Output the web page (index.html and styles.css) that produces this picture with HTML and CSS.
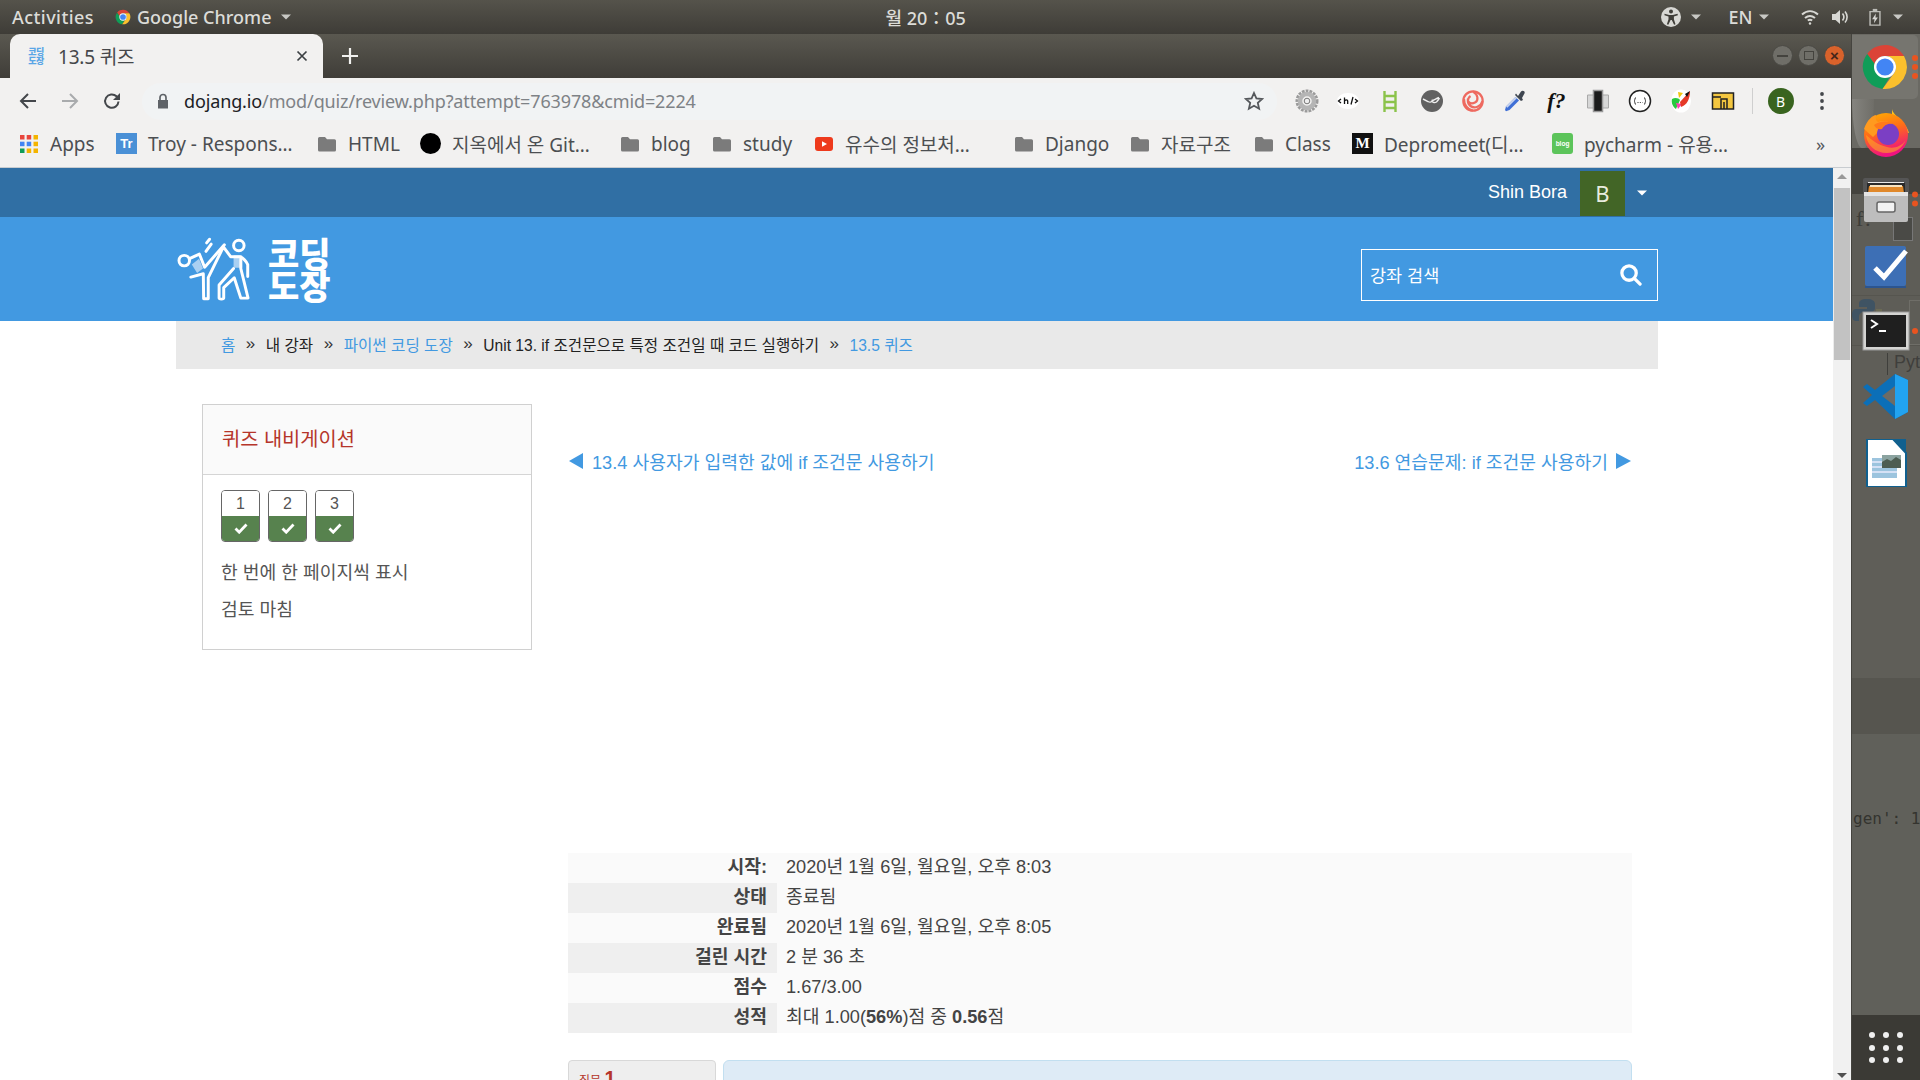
FILE: index.html
```html
<!DOCTYPE html>
<html lang="ko">
<head>
<meta charset="utf-8">
<title>13.5 퀴즈</title>
<link rel="stylesheet" href="styles.css">
</head>
<body>
<svg class="defs" width="0" height="0" aria-hidden="true">
  <symbol id="chrome" viewBox="0 0 48 48">
    <path fill="#db4437" d="M6.2 11A22 22 0 0 1 43 13H24a11 11 0 0 0-10.5 7.8z"/>
    <path fill="#0f9d58" d="M6.2 11a22 22 0 0 0 15.3 34.9l8-13.4a11 11 0 0 1-16-11.7z"/>
    <path fill="#fbc02d" d="M43 13a22 22 0 0 1-21.5 32.9l12-16.4A11 11 0 0 0 24 13z"/>
    <circle cx="24" cy="24" r="11" fill="#fff"/>
    <circle cx="24" cy="24" r="8.6" fill="#4285f4"/>
  </symbol>
  <symbol id="folder" viewBox="0 0 18 16">
    <path fill="#7b7b7b" d="M1.5 1h5.5l2 2.2h7.5a1.5 1.5 0 0 1 1.500 1.500V14a1.500 1.500 0 0 1-1.500 1.500h-15A1.500 1.500 0 0 1 0 14V2.500A1.500 1.500 0 0 1 1.500 1z"/>
  </symbol>
  <symbol id="caret" viewBox="0 0 10 6"><path fill="currentColor" d="M0 .5h10L5 5.500z"/></symbol>
</svg>

<header class="topbar">
  <span class="tb-activities">Activities</span>
  <span class="tb-app"><svg class="i16"><use href="#chrome"/></svg>Google Chrome<svg class="tb-caret"><use href="#caret"/></svg></span>
  <span class="tb-clock">월 20：05</span>
  <span class="tb-tray">
    <svg class="i20" viewBox="0 0 20 20"><circle cx="10" cy="10" r="10" fill="#d8d8d4"/><circle cx="10" cy="4.500" r="2" fill="#3f3d38"/><path fill="#3f3d38" d="M3.500 6.800l4.700 1.100h3.600l4.700-1.100.4 1.400-4 1.400v2.600l1.600 5-1.400.5-2.300-4.600h-1.200l-2.300 4.600-1.400-.5 1.600-5V9.600l-4-1.400z"/></svg>
    <svg class="tb-caret tc-a"><use href="#caret"/></svg>
    <span class="tb-lang">EN</span>
    <svg class="tb-caret tc-b"><use href="#caret"/></svg>
    <svg class="i18 tc-c" viewBox="0 0 18 18" fill="none" stroke="#d8d8d4" stroke-width="2"><path d="M1 6.500c5-4.500 11-4.500 16 0M4 10c3-2.500 7-2.500 10 0"/><path d="M6.800 12.500c1.400-1 3-1 4.400 0"/><circle cx="9" cy="15.500" r="1.200" fill="#d8d8d4" stroke="none"/></svg>
    <svg class="i18 tc-d" viewBox="0 0 18 18"><path fill="#d8d8d4" d="M1 6h3.500L9 2v14l-4.500-4H1z"/><path fill="none" stroke="#d8d8d4" stroke-width="1.600" d="M11.500 5.500c1.600 2 1.600 5 0 7M14 3.500c2.800 3.200 2.800 8 0 11"/></svg>
    <svg class="i18 tc-e" viewBox="0 0 14 20"><path fill="none" stroke="#bdbdb8" stroke-width="1.600" d="M1.500 4h11v15h-11z"/><path fill="#bdbdb8" d="M4.500 1h5v3h-5z"/><path fill="#d8d8d4" d="M8 6L3.800 12.500h2.700L5.800 17 10.200 10.500H7.500z"/></svg>
    <svg class="tb-caret tc-f"><use href="#caret"/></svg>
  </span>
</header>

<div class="desk">
  <div class="browser">
    <div class="tabstrip">
      <div class="tab">
        <span class="fav">코딩<br>도장</span>
        <span class="tab-title">13.5 퀴즈</span>
        <svg class="tab-x" viewBox="0 0 12 12"><path stroke="#3c4043" stroke-width="1.700" d="M1.500 1.500l9 9M10.500 1.500l-9 9"/></svg>
      </div>
      <svg class="tab-plus" viewBox="0 0 16 16"><path stroke="#f1f1ef" stroke-width="2.200" d="M8 0v16M0 8h16"/></svg>
      <div class="winbtns">
        <span class="wb"><i class="wb-min"></i></span>
        <span class="wb"><i class="wb-max"></i></span>
        <span class="wb wb-close">×</span>
      </div>
    </div>

    <div class="toolbar">
      <svg class="nav" viewBox="0 0 20 20" fill="none" stroke="#44474b" stroke-width="2"><path d="M18 10H3M10 3l-7 7 7 7"/></svg>
      <svg class="nav" viewBox="0 0 20 20" fill="none" stroke="#a9abad" stroke-width="2"><path d="M2 10h15M10 3l7 7-7 7"/></svg>
      <svg class="nav" viewBox="0 0 20 20" fill="none" stroke="#44474b" stroke-width="2"><path d="M16.500 10.500a6.700 6.700 0 1 1-2-5.200L17 7.500"/><path fill="#44474b" stroke="none" d="M18 2v7h-7z"/></svg>
      <div class="omni">
        <svg class="lock" viewBox="0 0 12 16"><path fill="#5f6368" d="M1 7h10v8.500H1z"/><path fill="none" stroke="#5f6368" stroke-width="1.700" d="M3 7V4.500a3 3 0 0 1 6 0V7"/></svg>
        <span class="url"><b>dojang.io</b>/mod/quiz/review.php?attempt=763978&amp;cmid=2224</span>
        <svg class="star" viewBox="0 0 20 20"><path fill="none" stroke="#55585c" stroke-width="1.800" d="M10 2l2.400 5.400 5.800.6-4.400 3.900 1.300 5.800L10 14.700l-5.100 3 1.300-5.800L1.800 8l5.800-.6z"/></svg>
      </div>
      <div class="exts">
        <span class="ext"><svg viewBox="0 0 24 24"><circle cx="12" cy="12" r="9.500" fill="none" stroke="#9a9a9a" stroke-width="4" stroke-dasharray="2.600 1"/><circle cx="12" cy="12" r="7" fill="none" stroke="#b5b5b5" stroke-width="4.500"/><circle cx="12" cy="12" r="2.800" fill="#eee" stroke="#777"/></svg></span>
        <span class="ext"><svg viewBox="0 0 24 24"><ellipse cx="12" cy="12" rx="11" ry="8" fill="#fff"/><path fill="none" stroke="#111" stroke-width="1.300" d="M5 10l-2.500 2L5 14M8.500 8.500V15M8.500 12c1-1.500 3.200-1.500 3.200 0v3M15 15.500l2-7.500M19 10l2.500 2-2.500 2"/></svg></span>
        <span class="ext"><svg viewBox="0 0 24 24" fill="none" stroke="#8bc34a" stroke-width="2.400"><path d="M6.500 2v21M17.500 2v21M6 7h12M6 13h12M6 19h12"/></svg></span>
        <span class="ext"><svg viewBox="0 0 24 24"><circle cx="12" cy="12" r="11" fill="#616161"/><path fill="none" stroke="#eee" stroke-width="1.400" d="M3 10l5 2.500c1.500 1 3.500.8 4-.5.500 1.800 3 2 4.500 1 1-1 2-2.500 3-4M12 12c1-1 3-1.500 7-3.500"/></svg></span>
        <span class="ext"><svg viewBox="0 0 24 24" fill="none" stroke="#ee6a60" stroke-width="2.200"><circle cx="12" cy="12" r="9.700"/><path d="M12 2.500c5 3 6 9 2 11s-8 0-7-4M21.500 12c-1.500 5.500-8 8-12 5s-3-8 0-10M3 10c0 5 3 11 9 11.500"/></svg></span>
        <span class="ext"><svg viewBox="0 0 24 24"><path fill="#3f4650" d="M15 7l3-4.500c1.500-1.500 4-.5 3.700 1.500L19 9l1 2-2 1-6-6 1-1.500z"/><path fill="#3f6fd6" d="M12.500 8l3.500 3.500-9.500 9.500-3.500 1.200L2 21l1-3.500z"/><path fill="#c8d4ee" d="M12.500 8l1.300 1.300-9.500 9.500-1.300-1.300z"/></svg></span>
        <span class="ext ext-f"><i>f</i>?</span>
        <span class="ext"><svg viewBox="0 0 24 24"><path fill="#d7d7d7" stroke="#a9a9a9" d="M1.500 6h21v13h-21z"/><path fill="#1b1b1b" stroke="#999" stroke-width="1.500" d="M7.500 1.500h9v21h-9z"/></svg></span>
        <span class="ext"><svg viewBox="0 0 24 24"><circle cx="12" cy="12" r="10.500" fill="#fff" stroke="#222" stroke-width="1.500"/><path fill="none" stroke="#333" d="M8 8.500c-1.500 0-.8 3.500-2 3.500 1.200 0 .5 3.500 2 3.500M16 8.500c1.500 0 .8 3.500 2 3.500-1.200 0-.5 3.500-2 3.500"/><path stroke="#333" stroke-dasharray="1 1.300" d="M9.500 13.500h5"/></svg></span>
        <span class="ext"><svg viewBox="0 0 24 24"><ellipse cx="12" cy="12" rx="10" ry="11.500" fill="#fff"/><path fill="#27c93f" d="M3 10c3-2 7-1 8 1l-4 9c-3-2-5-6-4-10z"/><path fill="#ff3db4" d="M7 14l6 1-4 5z"/><path fill="#f1c40f" d="M9 3l5 1-4 5z"/><path fill="#e53927" d="M21 2L11 13l1 5c6-2 9-8 9-16z"/><path fill="#111" d="M21 2l-5 3 2 3z"/></svg></span>
        <span class="ext"><svg viewBox="0 0 24 24"><rect x="1.500" y="4" width="21" height="16" fill="#f3c640" stroke="#222" stroke-width="1.500"/><path fill="none" stroke="#222" stroke-width="1.500" d="M2 8h8M10 20V10h6v10M13 20v-7"/></svg></span>
        <span class="ext-div"></span>
        <span class="avatar-b">B</span>
        <svg class="kebab" viewBox="0 0 4 18"><circle cx="2" cy="2" r="1.900" fill="#44474b"/><circle cx="2" cy="9" r="1.900" fill="#44474b"/><circle cx="2" cy="16" r="1.900" fill="#44474b"/></svg>
      </div>
    </div>

    <nav class="bookmarks">
      <span class="bm"><svg class="bi" viewBox="0 0 18 18"><g><rect width="4.500" height="4.500" fill="#e8453c"/><rect x="6.700" width="4.500" height="4.500" fill="#e8453c"/><rect x="13.500" width="4.500" height="4.500" fill="#f4b400"/><rect y="6.700" width="4.500" height="4.500" fill="#4285f4"/><rect x="6.700" y="6.700" width="4.500" height="4.500" fill="#4285f4"/><rect x="13.500" y="6.700" width="4.500" height="4.500" fill="#f4b400"/><rect y="13.500" width="4.500" height="4.500" fill="#0f9d58"/><rect x="6.700" y="13.500" width="4.500" height="4.500" fill="#f4b400"/><rect x="13.500" y="13.500" width="4.500" height="4.500" fill="#f4b400"/></g></svg>Apps</span>
      <span class="bm"><span class="bi-tr">Tr</span>Troy - Respons…</span>
      <span class="bm"><svg class="bi"><use href="#folder"/></svg>HTML</span>
      <span class="bm"><span class="bi-dot"></span>지옥에서 온 Git…</span>
      <span class="bm"><svg class="bi"><use href="#folder"/></svg>blog</span>
      <span class="bm"><svg class="bi"><use href="#folder"/></svg>study</span>
      <span class="bm"><svg class="bi" viewBox="0 0 18 18"><rect y="2" width="18" height="14" rx="3" fill="#ee3a1c"/><path fill="#fff" d="M7 6.200L12 9l-5 2.800z"/></svg>유수의 정보처…</span>
      <span class="bm"><svg class="bi"><use href="#folder"/></svg>Django</span>
      <span class="bm"><svg class="bi"><use href="#folder"/></svg>자료구조</span>
      <span class="bm"><svg class="bi"><use href="#folder"/></svg>Class</span>
      <span class="bm"><span class="bi-m">M</span>Depromeet(디…</span>
      <span class="bm"><span class="bi-blog">blog</span>pycharm - 유용…</span>
      <span class="bm-more">»</span>
    </nav>

    <div class="viewport">
      <main class="page">
        <div class="userbar">
          <span class="uname">Shin Bora</span>
          <span class="uavatar">B</span>
          <svg class="ucaret"><use href="#caret"/></svg>
        </div>
        <div class="brand">
          <div class="logo">
            <svg class="logo-fig" viewBox="50 197 228 196" fill="none" stroke="#fff" stroke-width="9" stroke-linecap="round" stroke-linejoin="round">
              <circle cx="72" cy="268" r="16"/>
              <circle cx="238" cy="222" r="16"/>
              <path d="M138 240l16-22M140 214l9-11"/>
              <path fill="#a9d0f2" stroke="none" d="M95 280l22-18 12 30-18 14zM222 252h26v38h-26z"/>
              <path d="M92 318l38-10 1 76h14v-64l46-94 22 30h28c10 4 18 12 24 24v36"/>
              <path d="M88 262l30-14 16 40 60-68"/>
              <path d="M222 292l-44 50v40c0 4 14 4 14 0v-32l32-30 20 62h22l-22-90v-30"/>
            </svg>
            <span class="logo-text">코딩<br>도장</span>
          </div>
          <div class="search">
            <span>강좌 검색</span>
            <svg class="search-i" viewBox="0 0 24 24" fill="none" stroke="#fff" stroke-width="3.400" stroke-linecap="round"><circle cx="10.500" cy="10.500" r="7.500"/><path d="M16.500 16.500L22 22"/></svg>
          </div>
        </div>
        <div class="crumbs">
          <a>홈</a><span class="sep">»</span><span>내 강좌</span><span class="sep">»</span><a>파이썬 코딩 도장</a><span class="sep">»</span><span>Unit 13. if 조건문으로 특정 조건일 때 코드 실행하기</span><span class="sep">»</span><a>13.5 퀴즈</a>
        </div>
        <div class="columns">
          <aside class="quiznav">
            <h2>퀴즈 내비게이션</h2>
            <div class="qn-body">
              <div class="qn-btns">
                <span class="qb"><span class="qb-n">1</span><span class="qb-s"><svg viewBox="0 0 14 11"><path fill="none" stroke="#fff" stroke-width="2.800" d="M1.500 5.500l3.700 3.700 7.300-7.700"/></svg></span></span>
                <span class="qb"><span class="qb-n">2</span><span class="qb-s"><svg viewBox="0 0 14 11"><path fill="none" stroke="#fff" stroke-width="2.800" d="M1.500 5.500l3.700 3.700 7.300-7.700"/></svg></span></span>
                <span class="qb"><span class="qb-n">3</span><span class="qb-s"><svg viewBox="0 0 14 11"><path fill="none" stroke="#fff" stroke-width="2.800" d="M1.500 5.500l3.700 3.700 7.300-7.700"/></svg></span></span>
              </div>
              <p class="qn-link">한 번에 한 페이지씩 표시</p>
              <p class="qn-link">검토 마침</p>
            </div>
          </aside>
          <section class="content">
            <div class="pager">
              <a><i class="tri-l"></i>13.4 사용자가 입력한 값에 if 조건문 사용하기</a>
              <a>13.6 연습문제: if 조건문 사용하기<i class="tri-r"></i></a>
            </div>
            <table class="review">
              <tr><th>시작:</th><td>2020년 1월 6일, 월요일, 오후 8:03</td></tr>
              <tr><th>상태</th><td>종료됨</td></tr>
              <tr><th>완료됨</th><td>2020년 1월 6일, 월요일, 오후 8:05</td></tr>
              <tr><th>걸린 시간</th><td>2 분 36 초</td></tr>
              <tr><th>점수</th><td>1.67/3.00</td></tr>
              <tr><th>성적</th><td>최대 1.00(<b>56%</b>)점 중 <b>0.56</b>점</td></tr>
            </table>
            <div class="question">
              <div class="q-info">질문 <b>1</b></div>
              <div class="q-body"></div>
            </div>
          </section>
        </div>
      </main>
      <div class="scrollbar">
        <i class="sb-up"></i>
        <span class="sb-thumb"></span>
        <i class="sb-down"></i>
      </div>
    </div>
  </div>

  <aside class="dock">
    <span class="ghost gh-feather"></span>
    <span class="ghost gh-f"><i>f</i>?</span>
    <span class="ghost gh-phone"></span>
    <svg class="ghost gh-py" viewBox="0 0 30 32"><path fill="#3f5363" d="M15 1c-6 0-8 2-8 5v3h8v2H4c-3 0-4 3-4 6s1 6 4 6h3v-4c0-3 2-5 5-5h7c2 0 4-2 4-4V6c0-3-3-5-8-5z"/><path fill="#6b6a55" d="M24 11v4c0 3-2 5-5 5h-6v8c3 2 14 3 14-2v-4h3v-11z"/></svg>
    <span class="ghost gh-line"></span>
    <span class="ghost gh-pyth">Pyth</span>
    <span class="ghost gh-box"></span>
    <span class="ghost gh-gen">gen': 1</span>

    <div class="dock-cell dock-active">
      <svg class="di"><use href="#chrome"/></svg>
      <span class="pips"><i></i><i></i><i></i></span>
    </div>
    <div class="dock-cell">
      <svg class="di" viewBox="0 0 48 48">
        <defs><linearGradient id="ff" x1="0" y1="0" x2="0.3" y2="1"><stop offset="0" stop-color="#ffb300"/><stop offset=".5" stop-color="#ff6b1a"/><stop offset="1" stop-color="#f0127f"/></linearGradient></defs>
        <path fill="#ffc21a" d="M30 0c1 7 14 12 17 24L30 20z"/>
        <circle cx="24" cy="26" r="22" fill="url(#ff)"/>
        <path fill="#ff9a1f" d="M2 20c3-9 9-14 12-14-1 3 0 6 2 7 5-2 12-1 17 4l-14 3-8 8z"/>
        <circle cx="26" cy="25" r="11" fill="#7b3fc4"/>
        <path fill="#ff7a1a" d="M12 16c5-4 14-5 19-1-6-1-9 2-11 5-3 1-6 0-8-4z"/>
        <path fill="#ffb01f" d="M4 26c1 10 9 18 21 18 9 0 15-5 19-13-5 7-13 9-19 7-9-2-15-7-21-12z" opacity=".55"/>
      </svg>
    </div>
    <div class="dock-cell">
      <svg class="di" viewBox="0 0 48 48">
        <path fill="#555" d="M3 3h42a2 2 0 0 1 2 2v14H1V5a2 2 0 0 1 2-2z"/>
        <path fill="#e8e8e8" d="M6 7h36v12H6z"/>
        <path fill="#2a2a2a" d="M5 8h38v10H5z"/>
        <path fill="#e0882a" d="M7 11h34l1 7H6z"/>
        <path fill="#f7e3c0" d="M8 10h32v2H8z"/>
        <path fill="#bdbdbd" d="M2 19h44v26a2 2 0 0 1-2 2H4a2 2 0 0 1-2-2z"/>
        <path fill="#e4e4e4" d="M2 17h44v4H2z"/>
        <rect x="15" y="27" width="18" height="10" rx="2" fill="#f2f2f2" stroke="#666" stroke-width="1.500"/>
      </svg>
      <span class="pips"><i></i><i></i></span>
    </div>
    <div class="dock-cell">
      <svg class="di" viewBox="0 0 48 48">
        <rect x="3" y="5" width="41" height="40" rx="2" fill="#3d6fb5"/>
        <path fill="#2c5590" d="M3 45h41v2H3z"/>
        <path fill="none" stroke="#fff" stroke-width="5" d="M13 27l9 9L44 10"/>
      </svg>
    </div>
    <div class="dock-cell">
      <svg class="di" viewBox="0 0 48 48">
        <rect x="1" y="5" width="46" height="38" fill="#d4d4d2" stroke="#999"/>
        <rect x="4" y="8" width="40" height="32" fill="#1f1f1f"/>
        <path fill="none" stroke="#fff" stroke-width="2" d="M9 13l6 4-6 4"/>
        <path stroke="#fff" stroke-width="2" d="M17 24h7"/>
      </svg>
      <span class="pips"><i></i></span>
    </div>
    <div class="dock-cell">
      <svg class="di" viewBox="0 0 48 48">
        <path fill="#0b6fb8" d="M33 1l13 6v32l-13 7-20-19-8 6-4-3 9-8-9-8 4-3 8 6z"/>
        <path fill="#22a3f0" d="M33 1l13 6v32l-13 7z"/>
        <path fill="#6c6b65" d="M33 13v20l-13-10z"/>
      </svg>
    </div>
    <div class="dock-cell">
      <svg class="di" viewBox="0 0 48 48">
        <path fill="#fff" stroke="#10608f" stroke-width="2" d="M5 0h26l13 14v34H5z"/>
        <path fill="#10608f" d="M32 0h12v13z"/>
        <path fill="#9cc4de" d="M10 19h25v20H10z"/>
        <path fill="#eef" d="M10 22h11v2H10zM10 27h11v2H10zM10 32h25v2H10z" opacity=".7"/>
        <path fill="#4d5d52" d="M20 16h19v13H20z"/>
        <path fill="#8ba3a0" d="M20 16h19v5l-5-3-5 4-4-2-5 3z"/>
      </svg>
    </div>
    <div class="dock-apps">
      <i></i><i></i><i></i><i></i><i></i><i></i><i></i><i></i><i></i>
    </div>
  </aside>
</div>
</body>
</html>
```

FILE: styles.css
```css
* { box-sizing: border-box; }
html, body { margin: 0; padding: 0; height: 100%; }
body {
  width: 1920px; height: 1080px; overflow: hidden;
  display: flex; flex-direction: column;
  font-family: "Liberation Sans", "Noto Sans CJK KR", sans-serif;
  background: #fff;
}
.defs { position: absolute; }
i { font-style: normal; }

/* GNOME top bar */
.topbar {
  height: 34px; flex: none; display: flex; align-items: center;
  background: linear-gradient(#55534b, #3e3c37);
  color: #dcdcd8; font: 500 18px "Noto Sans", "Noto Sans CJK KR", sans-serif;
  padding-left: 12px;
}
.tb-activities { width: 103px; letter-spacing: .45px; white-space: nowrap; }
.tb-app { display: flex; align-items: center; gap: 6px; white-space: nowrap; }
.i16 { width: 16px; height: 16px; }
.i18 { width: 18px; height: 18px; }
.i20 { width: 20px; height: 20px; }
.tb-caret { width: 10px; height: 6px; color: #c8c8c4; margin-left: 4px; }
.tb-clock { margin-left: 594px; width: 79px; white-space: nowrap; }
.tb-tray { display: flex; align-items: center; margin-left: 697px; }
.tb-lang { margin-left: 27px; width: 30px; }
.tc-a { margin-left: 10px; }
.tc-b { margin-left: 1px; }
.tc-c { margin-left: 32px; }
.tc-d { margin-left: 12px; }
.tc-e { margin-left: 17px; }
.tc-f { margin-left: 9px; }

.desk { flex: 1; display: flex; min-height: 0; }
.browser { width: 1851px; flex: none; display: flex; flex-direction: column; min-height: 0; }

/* tabs */
.tabstrip {
  height: 44px; flex: none; display: flex; align-items: flex-end;
  background: linear-gradient(#5a5850, #3f3d38);
  padding-left: 10px;
}
.tab {
  width: 313px; height: 44px; background: #f2f1f0; border-radius: 10px 10px 0 0;
  display: flex; align-items: center; padding-left: 16px;
}
.fav {
  width: 20px; font: 900 9px/9px "Noto Sans CJK KR", sans-serif; color: #5aa6e6;
  text-align: center; letter-spacing: -.5px;
}
.tab-title {
  margin-left: 12px; width: 238px; white-space: nowrap;
  font: 19px "Noto Sans", "Noto Sans CJK KR", sans-serif; color: #45474a; letter-spacing: -.2px;
}
.tab-x { width: 12px; height: 12px; }
.tab-plus { width: 16px; height: 16px; margin: 0 0 14px 19px; }
.winbtns { display: flex; gap: 5px; margin: 0 0 12px auto; padding-right: 6px; }
.wb {
  width: 21px; height: 21px; border-radius: 50%; background: #6f6e68; border: 1px solid #4a4944;
  display: flex; align-items: center; justify-content: center;
}
.wb-min { width: 11px; height: 2px; background: #44433e; }
.wb-max { width: 10px; height: 9px; border: 1.500px solid #44433e; }
.wb-close { background: #d9622b; color: #44261a; font: 700 15px/1 "Liberation Sans", sans-serif; }

/* toolbar */
.toolbar {
  height: 44px; flex: none; background: #f2f1f0; display: flex; align-items: center;
  padding: 2px 0 0 18px;
}
.nav { width: 20px; height: 20px; margin-right: 22px; }
.omni {
  width: 1135px; height: 37px; margin-left: -2px; border-radius: 19px; background: #f1f3f4;
  display: flex; align-items: center; padding: 0 13px 0 15px;
}
.lock { width: 12px; height: 16px; }
.url {
  margin-left: 15px; flex: 1;
  font: 18px "Noto Sans", sans-serif; color: #7e8286; letter-spacing: -.13px; white-space: nowrap;
}
.url b { font-weight: 400; color: #202124; }
.star { width: 20px; height: 20px; }
.exts { display: flex; align-items: center; margin-left: 9px; }
.ext { width: 41.600px; display: flex; justify-content: center; align-items: center; }
.ext svg { width: 24px; height: 24px; }
.ext-f { font: italic 700 22px "Liberation Serif", serif; color: #111; }
.ext-f i { font-style: italic; }
.ext-div { width: 1px; height: 26px; background: #cfcfcf; margin-left: 8px; }
.avatar-b {
  width: 26px; height: 26px; border-radius: 50%; background: #39641f; color: #fff; margin-left: 15px;
  display: flex; align-items: center; justify-content: center; font: 14px "Noto Sans", sans-serif;
}
.kebab { width: 4px; height: 18px; margin-left: 26px; }

/* bookmarks */
.bookmarks {
  height: 46px; flex: none; background: #f2f1f0; border-bottom: 1px solid #c8ccd0;
  display: grid; align-items: center; padding: 0 0 2px 20px;
  grid-template-columns: 96px 202px 102px 201px 92px 102px 200px 116px 124px 97px 200px 268px auto;
  font: 19px "Noto Sans", "Noto Sans CJK KR", sans-serif; color: #4c4f52;
}
.bm { display: flex; align-items: center; gap: 12px; white-space: nowrap; }
.bi { width: 18px; height: 18px; flex: none; }
.bi-tr, .bi-m, .bi-blog {
  width: 21px; height: 21px; flex: none; display: flex; align-items: center; justify-content: center;
  margin-right: -1px;
}
.bi-tr { background: #4a90d6; color: #fff; font: 700 13px "Liberation Sans", sans-serif; }
.bi-m { background: #111; color: #fff; font: 700 15px "Liberation Serif", serif; }
.bi-blog { background: #5cc45a; color: #fff; border-radius: 3px; font: 700 6.500px "Liberation Sans", sans-serif; }
.bi-dot { width: 21px; height: 21px; border-radius: 50%; background: #000; flex: none; margin-right: -1px; }
.bm-more { color: #55585c; font-size: 18px; margin-left: -4px; }

/* page */
.viewport { flex: 1; display: flex; min-height: 0; }
.page { flex: 1; min-width: 0; overflow: hidden; background: #fff; color: #333; }
.userbar {
  height: 49px; background: #306fa4; display: flex; align-items: center; justify-content: flex-end;
  padding-right: 191px; color: #fff; font-size: 18px;
}
.uname { margin-right: 13px; }
.uavatar {
  width: 45px; height: 45px; background: #426526; color: #e8ecde; margin-top: 1px;
  display: flex; align-items: center; justify-content: center; font: 22px "Noto Sans", sans-serif;
}
.ucaret { width: 10px; height: 6px; color: #fff; margin-left: 12px; margin-right: -5px; }
.brand {
  height: 104px; background: #4299e1; display: flex; align-items: center; justify-content: space-between;
  padding: 0 175px 0 177px;
}
.logo { display: flex; align-items: center; gap: 16px; }
.logo-fig { width: 75px; height: 65px; }
.logo-text {
  font: 900 34px/32px "Noto Sans CJK KR", sans-serif; color: #fff;
}
.search {
  width: 297px; height: 52px; border: 1px solid #fff; margin-top: 11px; color: #fff;
  display: flex; align-items: center; justify-content: space-between;
  padding: 0 15px 0 8px; font-size: 17.500px;
}
.search-i { width: 23px; height: 23px; }
.crumbs {
  margin: 0 175px 0 176px; height: 48px; background: #e9e9e9; color: #222;
  display: flex; align-items: center; padding: 0 0 3px 45px; font-size: 15.600px; white-space: nowrap;
}
.crumbs a { color: #4299e1; }
.sep { margin: 0 10.500px; font-size: 17px; color: #333; }

.columns { display: flex; padding: 35px 201px 0 202px; }
.quiznav {
  width: 330px; height: 246px; flex: none; border: 1px solid #d0d0d0; color: #555;
}
.quiznav h2 {
  margin: 0; height: 70px; padding: 0 19px 4px; display: flex; align-items: center; background: #fafafa;
  border-bottom: 1px solid #d5d5d5; font-size: 19.800px; font-weight: 400; color: #b5352a;
}
.qn-body { padding: 15px 18px; }
.qn-btns { display: flex; gap: 8px; margin-bottom: 19px; }
.qb {
  width: 39px; height: 52px; border: 1px solid #666; border-radius: 4px; overflow: hidden;
  display: flex; flex-direction: column;
}
.qb-n { height: 25px; text-align: center; font-size: 16px; line-height: 25px; color: #555; background: #fff; }
.qb-s { flex: 1; background: #57824e; display: flex; align-items: center; justify-content: center; }
.qb-s svg { width: 14px; height: 11px; }
.qn-link { margin: 0 0 13px; font-size: 18.200px; line-height: 24px; }

.content { margin-left: 36px; flex: 1; min-width: 0; }
.pager {
  display: flex; justify-content: space-between; align-items: center; height: 24px; margin-top: 45px;
  font-size: 18.200px; color: #4299e1;
}
.pager a { display: flex; align-items: center; white-space: nowrap; }
.tri-l, .tri-r { width: 0; height: 0; border-top: 8px solid transparent; border-bottom: 8px solid transparent; }
.tri-l { border-right: 14px solid #4299e1; margin: 0 9px 0 1px; }
.tri-r { border-left: 15px solid #4299e1; margin: 0 1px 0 8px; }
.review {
  width: 100%; margin-top: 380px; border-collapse: collapse; font-size: 18.200px; line-height: 24px; color: #444;
}
.review th, .review td { height: 30px; padding: 0 0 3px; background: #fafafa; }
.review th { width: 209px; text-align: right; padding-right: 10px; font-weight: 700; }
.review td { padding-left: 9px; }
.review tr:nth-child(even) th { background: #efefef; }
.question { display: flex; gap: 7px; margin-top: 27px; }
.q-info {
  width: 148px; height: 60px; background: #eee; border: 1px solid #d8d8d8; border-radius: 4px;
  padding: 6px 10px; font-size: 12px; color: #b5352a; flex: none;
}
.q-info b { font-size: 20px; }
.q-body { flex: 1; height: 60px; background: #deebf6; border: 1px solid #c2dff0; border-radius: 6px; }

.scrollbar { width: 18px; flex: none; background: #f1f1f1; display: flex; flex-direction: column; align-items: center; }
.sb-up, .sb-down { width: 0; height: 0; border-left: 5px solid transparent; border-right: 5px solid transparent; }
.sb-up { border-bottom: 5px solid #999; margin: 6px 0 9px; }
.sb-thumb { width: 100%; height: 172px; background: #c2c2c2; border-left: 1px solid #ececec; border-right: 1px solid #ececec; }
.sb-down { border-top: 5px solid #505050; margin-top: auto; margin-bottom: 2px; }

/* dock */
.dock {
  width: 69px; flex: none; position: relative; display: flex; flex-direction: column; align-items: stretch;
  background: linear-gradient(#6a6963 0 114px, #44433e 114px 160px, #5e5d57 160px 261px, #56554f 261px 262px, #5e5d57 262px 311px, #56554f 311px 312px, #5f5e58 312px 644px, #56554f 644px 700px, #60605a 700px 981px, #3b3a35 981px);
  border-left: 1px solid #45443f;
}
.dock-cell { height: 66px; flex: none; display: flex; align-items: center; justify-content: center; position: relative; }
.dock-active { background: #76756f; border-radius: 0 5px 5px 0; height: 64px; margin: 1px 2px 1px 0; }
.di { width: 48px; height: 48px; position: relative; }
.pips { position: absolute; right: 2px; top: 50%; transform: translateY(-50%); display: flex; flex-direction: column; gap: 3px; }
.dock-active .pips { right: 0; }
.pips i { width: 6px; height: 6px; border-radius: 50%; background: #e95420; display: block; }
.ghost { position: absolute; }
.gh-feather { left: 0; top: 2px; width: 22px; height: 112px; background: linear-gradient(90deg, #85847f, #6f6e68); border-radius: 40% 60% 50% 50%; }
.gh-f { left: 4px; top: 172px; font: italic 22px "Liberation Serif", serif; color: #3c3c38; }
.gh-phone { left: 41px; top: 183px; width: 20px; height: 24px; background: #4a4a46; border: 1px solid #777; }
.gh-py { left: 0; top: 264px; width: 30px; height: 32px; }
.gh-line { left: 35px; top: 319px; width: 1px; height: 22px; background: #3f3f3c; }
.gh-pyth { left: 42px; top: 318px; font: 18px "Liberation Sans", sans-serif; color: #3f3f3c; }
.gh-box { left: 57px; top: 266px; width: 12px; height: 45px; border: 1px solid #6f6e68; border-right: 0; }
.gh-gen { left: 1px; top: 775px; font: 16px "DejaVu Sans Mono", monospace; color: #34342f; white-space: nowrap; }
.dock-apps {
  position: absolute; left: 17px; bottom: 17px; display: grid; grid-template-columns: repeat(3, 6px); gap: 6.500px 8px;
}
.dock-apps i { width: 6px; height: 6px; border-radius: 50%; background: #f0f0f0; }
```
